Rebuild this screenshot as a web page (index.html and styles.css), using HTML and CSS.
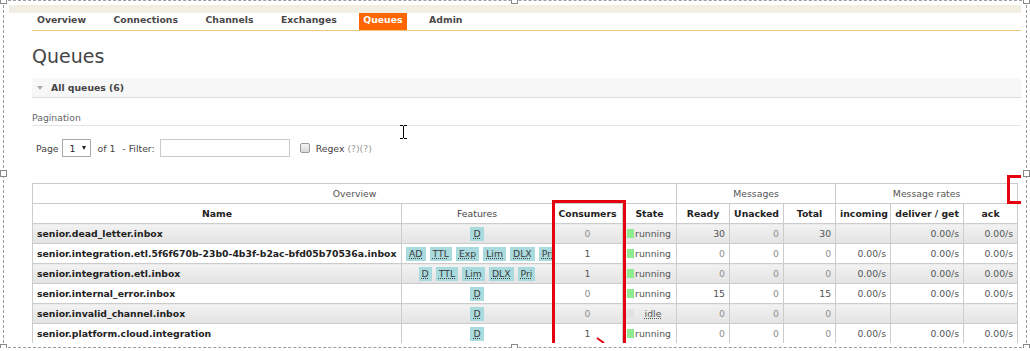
FILE: index.html
```html
<!DOCTYPE html>
<html lang="en">
  <head>
    <meta charset="UTF-8" />
    <meta name="viewport" content="width=device-width, initial-scale=1.0" />
    <title>RabbitMQ Management - Queues</title>
    <link rel="stylesheet" href="styles.css">
  </head>
  <body>
    <div class="frame">
      <div class="viewport">
        <div class="header-strip"></div>
        <div class="main">
          <ul class="menu">
            <li><a>Overview</a></li>
            <li><a>Connections</a></li>
            <li><a>Channels</a></li>
            <li><a>Exchanges</a></li>
            <li><a class="active">Queues</a></li>
            <li><a>Admin</a></li>
          </ul>
          <h1>Queues</h1>
          <div class="section-title"><span class="arrow"></span>All queues (6)</div>
          <h3>Pagination</h3>
          <div class="filter">
            <span>Page</span>
            <span class="select">1<span class="caret"></span></span>
            <span class="of">of 1</span>
            <span class="label">- Filter:</span>
            <input class="filter-input" type="text" />
            <span class="checkbox"></span>
            <span class="regex">Regex</span>
            <span class="help">(?)(?)</span>
          </div>

          <table class="list">
            <colgroup>
              <col style="width: 369px" />
              <col style="width: 151px" />
              <col style="width: 70px" />
              <col style="width: 54px" />
              <col style="width: 53px" />
              <col style="width: 54px" />
              <col style="width: 52px" />
              <col style="width: 55px" />
              <col style="width: 73px" />
              <col style="width: 54px" />
            </colgroup>
            <thead>
              <tr class="group">
                <th colspan="4">Overview</th>
                <th colspan="3">Messages</th>
                <th colspan="3">Message rates</th>
              </tr>
              <tr>
                <th>Name</th>
                <th class="plain">Features</th>
                <th>Consumers</th>
                <th>State</th>
                <th>Ready</th>
                <th>Unacked</th>
                <th>Total</th>
                <th>incoming</th>
                <th>deliver / get</th>
                <th>ack</th>
              </tr>
            </thead>
            <tbody>
              <tr class="alt1">
                <td class="name">senior.dead_letter.inbox</td>
                <td><div class="features"><abbr>D</abbr></div></td>
                <td class="c zero">0</td>
                <td><div class="state"><span class="dot green"></span><span>running</span></div></td>
                <td class="r">30</td>
                <td class="r zero">0</td>
                <td class="r">30</td>
                <td class="r"></td>
                <td class="r">0.00/s</td>
                <td class="r">0.00/s</td>
              </tr>
              <tr class="alt2">
                <td class="name">senior.integration.etl.5f6f670b-23b0-4b3f-b2ac-bfd05b70536a.inbox</td>
                <td><div class="features"><abbr>AD</abbr><abbr>TTL</abbr><abbr>Exp</abbr><abbr>Lim</abbr><abbr>DLX</abbr><abbr>Pri</abbr></div></td>
                <td class="c">1</td>
                <td><div class="state"><span class="dot green"></span><span>running</span></div></td>
                <td class="r zero">0</td>
                <td class="r zero">0</td>
                <td class="r zero">0</td>
                <td class="r">0.00/s</td>
                <td class="r">0.00/s</td>
                <td class="r">0.00/s</td>
              </tr>
              <tr class="alt1">
                <td class="name">senior.integration.etl.inbox</td>
                <td><div class="features"><abbr>D</abbr><abbr>TTL</abbr><abbr>Lim</abbr><abbr>DLX</abbr><abbr>Pri</abbr></div></td>
                <td class="c">1</td>
                <td><div class="state"><span class="dot green"></span><span>running</span></div></td>
                <td class="r zero">0</td>
                <td class="r zero">0</td>
                <td class="r zero">0</td>
                <td class="r">0.00/s</td>
                <td class="r">0.00/s</td>
                <td class="r">0.00/s</td>
              </tr>
              <tr class="alt2">
                <td class="name">senior.internal_error.inbox</td>
                <td><div class="features"><abbr>D</abbr></div></td>
                <td class="c zero">0</td>
                <td><div class="state"><span class="dot green"></span><span>running</span></div></td>
                <td class="r">15</td>
                <td class="r zero">0</td>
                <td class="r">15</td>
                <td class="r">0.00/s</td>
                <td class="r">0.00/s</td>
                <td class="r">0.00/s</td>
              </tr>
              <tr class="alt1">
                <td class="name">senior.invalid_channel.inbox</td>
                <td><div class="features"><abbr>D</abbr></div></td>
                <td class="c zero">0</td>
                <td><div class="state"><span class="dot grey"></span><abbr class="idle">idle</abbr></div></td>
                <td class="r zero">0</td>
                <td class="r zero">0</td>
                <td class="r zero">0</td>
                <td class="r"></td>
                <td class="r"></td>
                <td class="r"></td>
              </tr>
              <tr class="alt2">
                <td class="name">senior.platform.cloud.integration</td>
                <td><div class="features"><abbr>D</abbr></div></td>
                <td class="c">1</td>
                <td><div class="state"><span class="dot green"></span><span>running</span></div></td>
                <td class="r zero">0</td>
                <td class="r zero">0</td>
                <td class="r zero">0</td>
                <td class="r">0.00/s</td>
                <td class="r">0.00/s</td>
                <td class="r">0.00/s</td>
              </tr>
            </tbody>
          </table>
        </div>

        <!-- mouse cursor and hand-drawn red marks lying over the page -->
        <svg class="ibeam" width="7" height="14" viewBox="0 0 7 14">
          <path d="M0 0.5h3M4 0.5h3M3.5 1v12M0 13.5h3M4 13.5h3" stroke="#000" fill="none" />
        </svg>
        <div class="mark mark-consumers"></div>
        <div class="mark mark-corner"></div>
        <svg class="mark-arrow" width="10" height="8" viewBox="0 0 10 8">
          <path d="M1 1l7 5" stroke="#e6000e" stroke-width="2" fill="none" />
        </svg>
      </div>

      <span class="handle tl"></span>
      <span class="handle tm"></span>
      <span class="handle tr"></span>
      <span class="handle ml"></span>
      <span class="handle mr"></span>
      <span class="handle bl"></span>
      <span class="handle bm"></span>
      <span class="handle br"></span>
    </div>
  </body>
</html>
```

FILE: styles.css
```css
* {
  margin: 0;
  padding: 0;
  box-sizing: border-box;
}
body {
  font-family: "DejaVu Sans", Verdana, sans-serif;
  font-size: 9.3px;
  color: #484848;
  background: #fff;
}
.frame {
  position: relative;
  width: 1024px;
  height: 348px;
  margin-left: 3px;
  border: 1px dashed #9c9c9c;
}
.viewport {
  position: relative;
  width: 1012px;
  height: 338px;
  margin: 4px 0 0 5px;
  overflow: hidden;
}
.header-strip {
  height: 8px;
  background: #f1eee4;
}
.main {
  padding-left: 23px;
}
.menu {
  display: flex;
  gap: 17.5px;
  list-style: none;
  height: 18px;
  border-bottom: 1px solid #eec77d;
  a {
    display: block;
    padding: 0 5px 3px;
    line-height: 14px;
    font-weight: bold;
    color: #484848;
  }
  a.active {
    padding: 0 4px 3px;
    background: #f60;
    color: #fff;
  }
}
h1 {
  font-size: 19px;
  font-weight: normal;
  line-height: 24px;
  color: #444;
  margin: 13px 0 10px;
}
.section-title {
  display: flex;
  align-items: center;
  height: 20px;
  padding-left: 5px;
  background: #f7f7f7;
  border-bottom: 1px solid #ddd;
  font-weight: bold;
  color: #444;
}
.arrow {
  width: 0;
  height: 0;
  margin-right: 8px;
  border-style: solid;
  border-width: 4px 3.5px 0;
  border-color: #aaa transparent transparent;
}
h3 {
  margin-top: 13px;
  font-size: 9.3px;
  font-weight: normal;
  line-height: 14px;
  color: #666;
  border-bottom: 1px solid #e4e4e4;
}
.filter {
  display: flex;
  align-items: center;
  height: 18px;
  margin-top: 13px;
  padding-left: 4px;
  color: #444;
}
.select {
  display: flex;
  align-items: center;
  width: 29px;
  height: 18px;
  margin-left: 3px;
  padding-left: 7px;
  border: 1px solid #a9a9a9;
  color: #222;
}
.caret {
  width: 0;
  height: 0;
  margin-left: 7px;
  border-style: solid;
  border-width: 4px 2.5px 0;
  border-color: #222 transparent transparent;
}
.of {
  margin-left: 7px;
}
.label {
  margin-left: 7px;
}
.filter-input {
  width: 130px;
  height: 18px;
  margin-left: 5px;
  border: 1px solid #ccc;
}
.checkbox {
  width: 10px;
  height: 10px;
  margin-left: 10px;
  border: 1px solid #9a9a9a;
  border-radius: 2px;
  background: linear-gradient(#f4f4f4, #d8d8d8);
}
.regex {
  margin-left: 6px;
}
.help {
  margin-left: 3px;
  color: #999;
}
.list {
  margin-top: 26px;
  width: 985px;
  table-layout: fixed;
  border-collapse: collapse;
  th,
  td {
    height: 20px;
    padding: 0 4px;
    border: 1px solid #ccc;
    white-space: nowrap;
    overflow: hidden;
    line-height: 18px;
  }
  th {
    background: #fff;
    color: #222;
    text-align: center;
  }
  th.plain {
    font-weight: normal;
    color: #484848;
  }
  tr.group th {
    font-weight: normal;
    color: #555;
  }
  td {
    color: #555;
  }
  td.name {
    font-weight: bold;
    color: #222;
  }
  td.c {
    text-align: center;
  }
  td.r {
    text-align: right;
  }
  td.zero {
    color: #8e8e8e;
  }
  tr.alt1 td {
    background: linear-gradient(#f2f2f2, #e3e3e3);
  }
  tr.alt2 td {
    background: #fff;
  }
}
.features {
  display: flex;
  justify-content: safe center;
  gap: 4px;
  abbr {
    display: block;
    padding: 0 3px;
    line-height: 14px;
    background: #a9dbde;
    color: #3c3c3c;
    text-decoration: underline dotted;
    text-underline-offset: 1px;
  }
}
.state {
  display: flex;
  align-items: center;
  span:last-child,
  .idle {
    flex: 1;
    text-align: center;
  }
  .idle {
    text-decoration: underline dotted;
    text-underline-offset: 1px;
  }
}
.dot {
  width: 7px;
  height: 9px;
}
.dot.green {
  background: #90ea90;
}
.dot.grey {
  background: #e2e2e2;
}
.ibeam {
  position: absolute;
  left: 391px;
  top: 120px;
}
.mark {
  position: absolute;
  border: 3px solid #e6000e;
}
.mark-consumers {
  left: 543px;
  top: 195px;
  width: 74px;
  height: 200px;
}
.mark-corner {
  left: 998px;
  top: 170px;
  width: 40px;
  height: 29px;
}
.mark-arrow {
  position: absolute;
  left: 587px;
  top: 332px;
}
.handle {
  position: absolute;
  width: 7px;
  height: 7px;
  background: #fff;
  border: 1px solid #8a8a8a;
}
.handle.tl { left: -4px; top: -4px; }
.handle.tm { left: 507px; top: -4px; }
.handle.tr { right: -4px; top: -4px; }
.handle.ml { left: -4px; top: 169px; }
.handle.mr { right: -4px; top: 169px; }
.handle.bl { left: -4px; bottom: -4px; }
.handle.bm { left: 507px; bottom: -4px; }
.handle.br { right: -4px; bottom: -4px; }
```
